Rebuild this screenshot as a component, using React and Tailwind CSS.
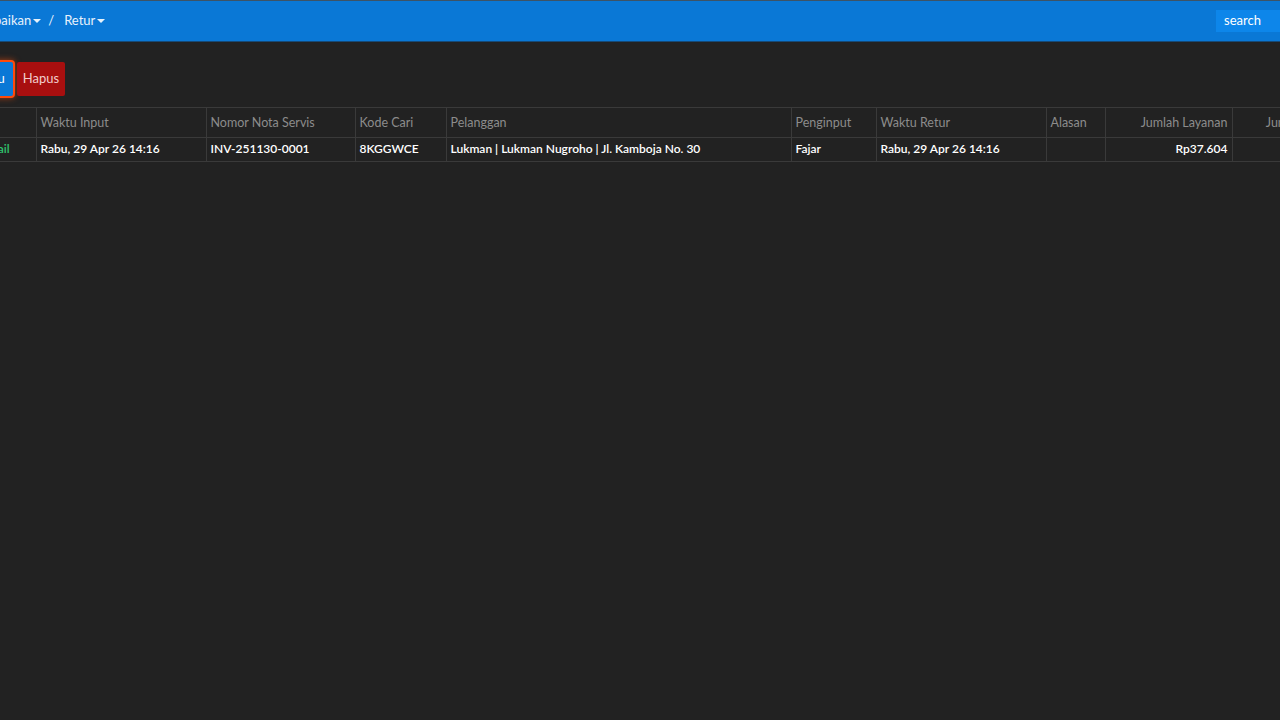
import React from "react";

const cols = [
  { key: "aksi", label: "Aksi", w: "w-[66px]" },
  { key: "waktu", label: "Waktu Input", w: "w-[170px]" },
  { key: "nota", label: "Nomor Nota Servis", w: "w-[149px]" },
  { key: "kode", label: "Kode Cari", w: "w-[91px]" },
  { key: "pelanggan", label: "Pelanggan", w: "w-[345px]" },
  { key: "penginput", label: "Penginput", w: "w-[85px]" },
  { key: "retur", label: "Waktu Retur", w: "w-[170px]" },
  { key: "alasan", label: "Alasan", w: "w-[59px]" },
  { key: "layanan", label: "Jumlah Layanan", w: "w-[127px]", right: true },
  { key: "sparepart", label: "Jumlah Sparepart", w: "w-[133px]", right: true },
];

const row = {
  waktu: "Rabu, 29 Apr 26 14:16",
  nota: "INV-251130-0001",
  kode: "8KGGWCE",
  pelanggan: "Lukman | Lukman Nugroho | Jl. Kamboja No. 30",
  penginput: "Fajar",
  retur: "Rabu, 29 Apr 26 14:16",
  alasan: "",
  layanan: "Rp37.604",
  sparepart: "",
};

const Caret = () => (
  <span className="inline-block ml-[2px] w-0 h-0 border-l-[4px] border-r-[4px] border-t-[4px] border-l-transparent border-r-transparent border-t-white/90 align-middle" />
);

export default function App() {
  return (
    <div className="w-[1280px] h-[720px] overflow-hidden bg-[#222222] font-['Lato','Open_Sans',sans-serif]">
      <div className="w-[1500px] -ml-[46px]">
        <header className="h-[42px] bg-[#0a78d6] border-t border-t-[#3d5366] border-b border-b-[#164a78] flex items-center justify-between">
          <nav className="flex items-center text-[13px] text-[#e8f2fc] pl-[21px]">
            <span>Perbaikan</span>
            <Caret />
            <span className="ml-[7px] mr-[10px]">/</span>
            <span>Retur</span>
            <Caret />
          </nav>
          <div className="flex items-center pr-[154px]">
            <button className="h-[22px] px-[8px] bg-[#0d86ea] text-white text-[13px] w-[84px] text-left">
              search
            </button>
          </div>
        </header>

        <div className="pl-[16px] pt-[20px] flex gap-[4px]">
          <button className="h-[34px] px-[8px] bg-[#0a78d6] text-white text-[13px] rounded-[2px] ring-2 ring-[#ff4a0a] shadow-[0_0_6px_2px_rgba(255,80,10,0.6)]">
            Baru
          </button>
          <button className="h-[34px] px-[6px] bg-[#a80f0f] text-[#f1cccc] text-[13px] rounded-[2px]">
            Hapus
          </button>
        </div>

        <div className="pl-[16px] pt-[11px]">
          <table className="border-collapse table-fixed">
            <thead>
              <tr className="h-[30px] border-t border-b border-[#3a3a3a]">
                {cols.map((c) => (
                  <th
                    key={c.key}
                    className={`${c.w} px-[4px] pt-[2px] font-normal text-[12.5px] text-[#8c8c8c] border-r border-[#3a3a3a] whitespace-nowrap ${
                      c.right ? "text-right" : "text-left"
                    }`}
                  >
                    {c.label}
                  </th>
                ))}
              </tr>
            </thead>
            <tbody>
              <tr className="h-[24px] border-b border-[#3a3a3a]">
                {cols.map((c) => (
                  <td
                    key={c.key}
                    className={`px-[4px] pb-[1px] text-[12px] font-semibold text-white border-r border-[#3a3a3a] whitespace-nowrap ${
                      c.right ? "text-right" : "text-left"
                    }`}
                  >
                    {c.key === "aksi" ? (
                      <span className="text-[#2fc46e] pl-[4px]">Detail</span>
                    ) : (
                      row[c.key]
                    )}
                  </td>
                ))}
              </tr>
            </tbody>
          </table>
        </div>
      </div>
    </div>
  );
}
